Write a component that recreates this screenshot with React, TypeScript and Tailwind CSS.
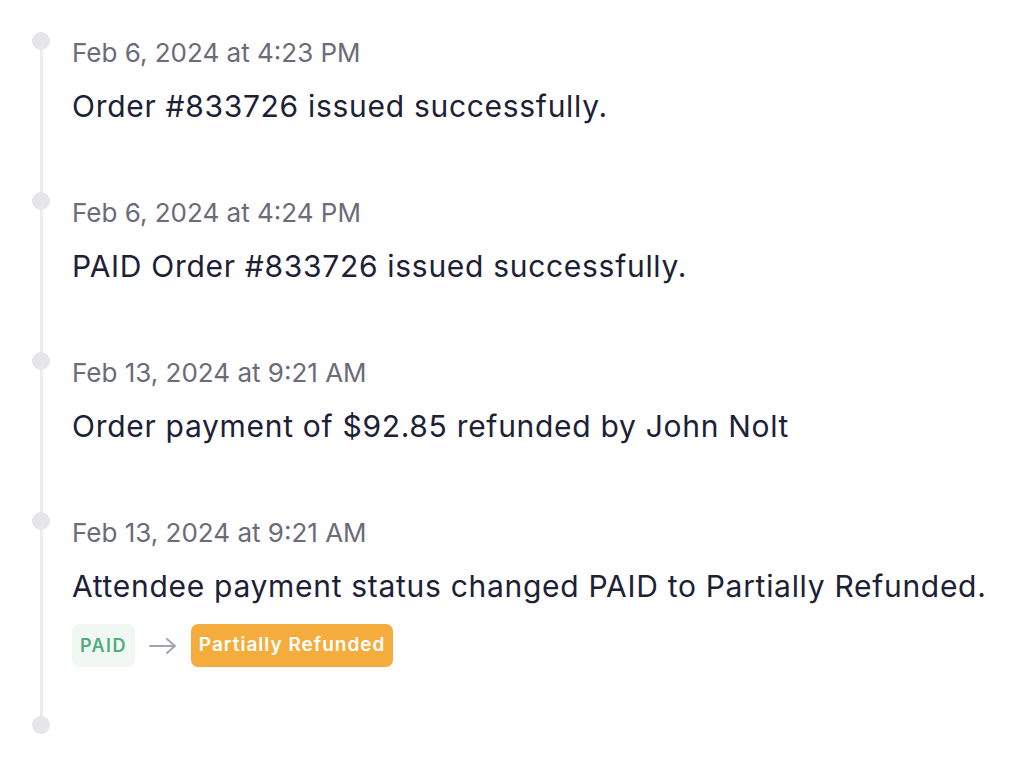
import React from "react"

interface Entry {
  date: string
  text: string
  badges?: boolean
}

const entries: Entry[] = [
  { date: "Feb 6, 2024 at 4:23 PM", text: "Order #833726 issued successfully." },
  { date: "Feb 6, 2024 at 4:24 PM", text: "PAID Order #833726 issued successfully." },
  { date: "Feb 13, 2024 at 9:21 AM", text: "Order payment of $92.85 refunded by John Nolt" },
  {
    date: "Feb 13, 2024 at 9:21 AM",
    text: "Attendee payment status changed PAID to Partially Refunded.",
    badges: true,
  },
]

const Dot = () => <div className="h-[18px] w-[18px] shrink-0 rounded-full bg-[#e6e6ea]" />

export default function App() {
  return (
    <div
      className="min-h-[766px] w-[1036px] bg-white pl-[32px] pt-[32px]"
      style={{ fontFamily: "Inter, 'Noto Sans', sans-serif" }}
    >
      {entries.map((e, i) => (
        <div key={i} className="flex">
          {/* rail */}
          <div className="flex w-[18px] shrink-0 flex-col items-center">
            <Dot />
            <div className="w-[3px] flex-1 bg-[#ececef]" />
          </div>

          {/* content */}
          <div className={`ml-[22px] pt-[5px] ${e.badges ? "pb-[49px]" : "pb-[68px]"}`}>
            <div className="text-[26px] leading-[32px] text-[#6b6b7a]">{e.date}</div>
            <div className="mt-[19px] text-[30px] leading-[36px] tracking-[0.7px] text-[#1c2136]">
              {e.text}
            </div>
            {e.badges && (
              <div className="mt-[20px] flex items-center">
                <span className="flex h-[43px] items-center rounded-[7px] bg-[#f1f7f3] px-[8px] text-[18px] font-semibold tracking-[1.4px] text-[#52ad7c]">
                  PAID
                </span>
                <svg
                  className="mx-[14px]"
                  width="28"
                  height="20"
                  viewBox="0 0 28 20"
                  fill="none"
                  stroke="#a3a3b1"
                  strokeWidth="2"
                  strokeLinecap="round"
                  strokeLinejoin="round"
                >
                  <path d="M1 10h25M18 3l8 7-8 7" />
                </svg>
                <span className="flex h-[43px] items-center rounded-[7px] bg-[#f4ad3d] px-[8px] text-[19px] font-semibold tracking-[1px] text-white">
                  Partially Refunded
                </span>
              </div>
            )}
          </div>
        </div>
      ))}
      <Dot />
    </div>
  )
}
